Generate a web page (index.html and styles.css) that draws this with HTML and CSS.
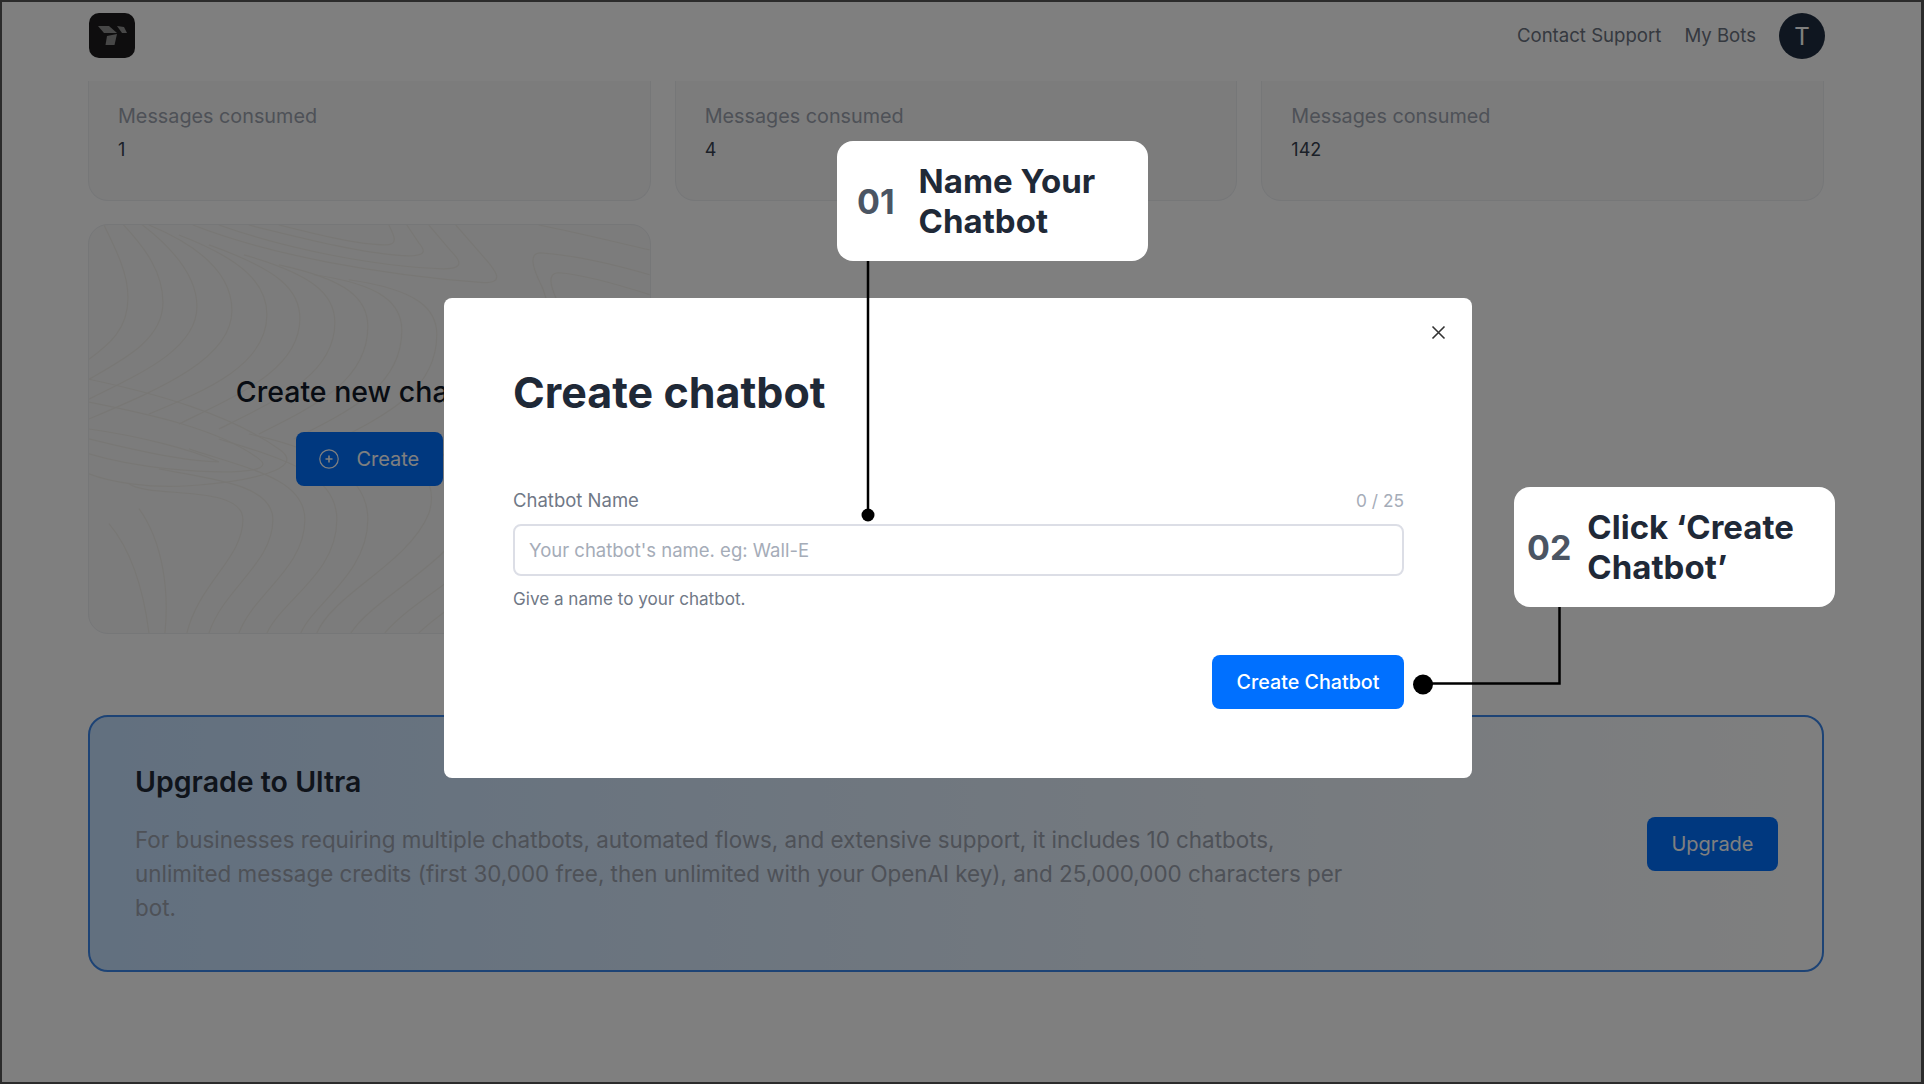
FILE: index.html
```html
<!DOCTYPE html>
<html lang="en">
<head>
    <meta charset="UTF-8">
    <meta name="viewport" content="width=device-width, initial-scale=1.0">
    <title>Create chatbot</title>
    <link rel="stylesheet" href="styles.css">
</head>
<body>
    <div class="frame">
        <!-- Top navigation -->
        <header class="top-bar">
            <div class="logo">
                <svg width="46" height="45" viewBox="0 0 46 45">
                    <polygon points="9,13 20,13 28,20 15,20" fill="#8e8e8e"/>
                    <polygon points="18,23 28,21 25.5,32 16.5,32" fill="#8e8e8e"/>
                    <polygon points="28,13 35,14 38,20 33,20" fill="#8e8e8e"/>
                </svg>
            </div>
            <nav class="top-links">
                <a class="top-link">Contact Support</a>
                <a class="top-link">My Bots</a>
                <div class="avatar">T</div>
            </nav>
        </header>

        <main class="dashboard">
            <!-- Bot cards, scrolled so that only their lower part shows -->
            <section class="bot-grid">
                <div class="bot-card">
                    <div class="bot-label">Messages consumed</div>
                    <div class="bot-value">1</div>
                </div>
                <div class="bot-card">
                    <div class="bot-label">Messages consumed</div>
                    <div class="bot-value">4</div>
                </div>
                <div class="bot-card">
                    <div class="bot-label">Messages consumed</div>
                    <div class="bot-value">142</div>
                </div>
            </section>

            <section class="bot-grid">
                <div class="create-card">
                    <svg class="contours" viewBox="0 0 561 410" preserveAspectRatio="none">
                        <!-- Upper left arcs -->
                        <path d="M10 -10 C30 30 39 50 39 73 C39 105 20 120 0 135"/>
                        <path d="M25 -10 C60 25 74 50 74 78 C74 115 35 135 0 155"/>
                        <path d="M40 -10 C90 25 108 55 108 82 C108 125 50 150 0 175"/>
                        <path d="M60 0 C120 25 143 55 143 86 C143 135 70 165 0 195"/>
                        <path d="M90 10 C155 35 178 60 178 90 C178 140 120 165 60 190"/>
                        <path d="M120 20 C190 45 211 65 211 94 C211 145 150 170 90 200"/>
                        <path d="M155 30 C225 50 246 70 246 98 C246 150 190 175 130 205"/>
                        <path d="M190 40 C260 55 279 75 279 102 C279 155 230 180 170 210"/>
                        <path d="M225 50 C295 60 313 80 313 106 C313 160 265 185 205 215"/>
                        <path d="M260 55 C330 65 348 85 348 110 C348 165 300 190 240 220"/>
                        <!-- Middle bands -->
                        <path d="M0 155 C70 170 140 190 190 225 C220 245 160 258 100 262 C60 265 20 258 0 250"/>
                        <path d="M0 178 C60 190 130 205 170 235 C190 250 130 250 80 245 C50 242 20 236 0 230"/>
                        <path d="M0 205 C50 212 100 225 130 238 C100 238 40 225 0 215"/>
                        <!-- Lower S-curves -->
                        <path d="M40 260 C60 275 154 260 154 296 C154 335 110 360 98 410"/>
                        <path d="M70 245 C120 255 184 260 184 296 C184 340 135 365 120 410"/>
                        <path d="M100 225 C160 245 216 255 216 296 C216 345 165 370 150 410"/>
                        <path d="M130 215 C195 235 248 250 248 296 C248 350 195 375 178 410"/>
                        <path d="M160 210 C230 225 279 250 279 296 C279 350 225 380 212 410"/>
                        <path d="M228 410 C245 370 320 340 340 290 C350 260 330 245 320 225"/>
                        <path d="M262 410 C285 375 360 340 380 295 C395 260 360 240 345 220"/>
                        <path d="M296 410 C325 375 400 340 425 295 C440 260 395 235 372 215"/>
                        <path d="M330 410 C365 375 440 340 470 295 C485 260 430 235 400 210"/>
                        <path d="M20 300 C45 330 55 370 60 410"/>
                        <path d="M50 285 C75 320 80 370 76 410"/>
                        <!-- Fold along the top edge -->
                        <path d="M104 0 C180 30 290 50 395 58 C415 58 408 48 400 38 L367 0"/>
                        <path d="M130 0 C200 25 290 42 355 44 C378 44 370 34 362 26 L340 0"/>
                        <path d="M160 0 C220 15 280 30 320 31 C340 31 335 24 330 18 L318 0"/>
                        <path d="M190 0 C230 10 270 20 296 20 C310 20 306 12 300 0"/>
                        <!-- Shape at the right edge -->
                        <path d="M561 50 C520 38 480 30 452 28 C440 28 444 42 450 55 C458 70 460 82 460 95"/>
                        <path d="M561 70 C530 60 495 50 470 48 C458 48 462 62 468 75 C474 88 476 98 476 115"/>
                        <path d="M561 25 C530 18 490 8 450 0"/>
                    </svg>
                    <h2 class="create-title">Create new chatbot</h2>
                    <button class="primary-dim create-button">
                        <svg width="20" height="20" viewBox="0 0 20 20" fill="none" stroke="#fff" stroke-width="1.2">
                            <circle cx="10" cy="10" r="9.2"/>
                            <path d="M10 6.5V13.5M6.5 10H13.5" stroke-width="1.6"/>
                        </svg>
                        Create
                    </button>
                </div>
            </section>

            <!-- Upgrade banner -->
            <section class="upgrade-card">
                <div class="upgrade-copy">
                    <h3 class="upgrade-title">Upgrade to Ultra</h3>
                    <p class="upgrade-text">For businesses requiring multiple chatbots, automated flows, and extensive support, it includes 10 chatbots, unlimited message credits (first 30,000 free, then unlimited with your OpenAI key), and 25,000,000 characters per bot.</p>
                </div>
                <button class="primary-dim upgrade-button">Upgrade</button>
            </section>
        </main>

        <!-- Dark overlay with the dialog -->
        <div class="overlay">
            <div class="modal">
                <svg class="modal-close" width="15" height="15" viewBox="0 0 15 15" fill="none" stroke="#333" stroke-width="1.6">
                    <path d="M1.5 1.5L13.5 13.5M13.5 1.5L1.5 13.5"/>
                </svg>
                <h1 class="modal-title">Create chatbot</h1>
                <div class="field-head">
                    <label class="field-label">Chatbot Name</label>
                    <span class="field-count">0 / 25</span>
                </div>
                <input class="field-input" type="text" placeholder="Your chatbot's name. eg: Wall-E">
                <div class="field-help">Give a name to your chatbot.</div>
                <div class="modal-actions">
                    <button class="submit-button">Create Chatbot</button>
                </div>
            </div>
        </div>

        <!-- Tutorial annotations -->
        <svg class="connectors" width="1924" height="1084" viewBox="0 0 1924 1084" fill="none" stroke="#000" stroke-width="2.5">
            <path d="M868 261V515"/>
            <circle cx="868" cy="515" r="6.5" fill="#000" stroke="none"/>
            <path d="M1559.5 607V683.5H1423"/>
            <circle cx="1423" cy="684.5" r="10" fill="#000" stroke="none"/>
        </svg>
        <div class="callout callout-one">
            <span class="callout-number">01</span>
            <span class="callout-text">Name Your Chatbot</span>
        </div>
        <div class="callout callout-two">
            <span class="callout-number">02</span>
            <span class="callout-text">Click ‘Create Chatbot’</span>
        </div>
    </div>
</body>
</html>
```

FILE: styles.css
```css
/* General page styling */
* {
    box-sizing: border-box;
}

body {
    margin: 0;
    background: #fff;
    font-family: Inter, "Liberation Sans", sans-serif;
}

/* Screenshot frame with its thin dark edge */
.frame {
    position: relative;
    height: 1084px;
    overflow: hidden;
    border-style: solid;
    border-color: #2b2b2b;
    border-width: 2px 3px 2px 2px;
}

/* Top bar */
.top-bar {
    height: 79px;
    padding: 11px 96px 0 87px;
    display: flex;
    align-items: flex-start;
    justify-content: space-between;
    background: #fff;
}

.logo {
    width: 46px;
    height: 45px;
    border-radius: 10px;
    background: #1c1a1c;
}

.logo svg {
    display: block;
}

.top-links {
    display: flex;
    align-items: center;
}

.top-link {
    margin: -2px 23px 0 0;
    font-size: 18.6px;
    color: #6b7280;
}

.avatar {
    width: 46px;
    height: 46px;
    border-radius: 50%;
    background: #1f2d40;
    color: #fff;
    font-size: 24px;
    display: flex;
    align-items: center;
    justify-content: center;
}

/* Dashboard content */
.dashboard {
    padding: 0 97px 0 86px;
}

.bot-grid {
    display: grid;
    grid-template-columns: repeat(3, 1fr);
    gap: 24px;
    margin-bottom: 23px;
}

.bot-card {
    height: 120px;
    padding: 23px 29px 0;
    background: #f8f8f8;
    border: 1px solid #eceef1;
    border-top: none;
    border-radius: 0 0 20px 20px;
}

.bot-label {
    font-size: 19.8px;
    line-height: 24px;
    color: #9ca3af;
}

.bot-value {
    margin-top: 10px;
    font-size: 18px;
    line-height: 24px;
    color: #374151;
}

/* Create new chatbot card */
.create-card {
    position: relative;
    height: 410px;
    display: flex;
    flex-direction: column;
    align-items: center;
    justify-content: center;
    background: #f8f8f8;
    border: 1px solid #eceef1;
    border-radius: 20px;
    overflow: hidden;
}

.contours {
    position: absolute;
    inset: 0;
    width: 100%;
    height: 100%;
    fill: none;
    stroke: #f1efea;
    stroke-width: 1.2;
}

.create-title {
    position: relative;
    margin: 2px 0 22px;
    font-size: 28.5px;
    line-height: 36px;
    font-weight: 500;
    color: #111827;
}

.primary-dim {
    background: #0070ff;
    color: #fff;
    border: none;
    border-radius: 8px;
    font-family: inherit;
    font-size: 20px;
}

.create-button {
    position: relative;
    width: 147px;
    height: 54px;
    display: flex;
    align-items: center;
    justify-content: center;
    gap: 17px;
}

/* Upgrade banner */
.upgrade-card {
    margin-top: 81px;
    height: 257px;
    padding: 0 44px 0 45px;
    display: flex;
    align-items: center;
    justify-content: space-between;
    border: 2px solid #3a86ea;
    border-radius: 20px;
    background: linear-gradient(90deg, #c4e0ff, #ffffff);
}

.upgrade-copy {
    width: 1220px;
    margin-top: 1px;
}

.upgrade-title {
    margin: 0 0 23px;
    font-size: 28.5px;
    line-height: 36px;
    font-weight: 600;
    color: #1f2937;
}

.upgrade-text {
    margin: 0;
    font-size: 22.4px;
    line-height: 34px;
    color: #9ca3af;
}

.upgrade-button {
    width: 131px;
    height: 54px;
}

/* Dark overlay and dialog */
.overlay {
    position: absolute;
    inset: 0;
    padding: 296px 0 0 442px;
    background: rgba(0, 0, 0, 0.5);
}

.modal {
    position: relative;
    width: 1028px;
    height: 480px;
    padding: 68px 68px 0 69px;
    background: #fff;
    border-radius: 8px;
}

.modal-close {
    position: absolute;
    top: 27px;
    right: 26px;
}

.modal-title {
    margin: 0 0 70px;
    font-size: 43px;
    line-height: 52px;
    font-weight: 700;
    color: #1f2937;
}

.field-head {
    display: flex;
    justify-content: space-between;
    align-items: center;
    height: 24px;
    margin-bottom: 12px;
}

.field-label {
    font-size: 18.5px;
    color: #707886;
}

.field-count {
    font-size: 17.3px;
    color: #a5acb8;
}

.field-input {
    display: block;
    width: 100%;
    height: 52px;
    padding: 0 14px;
    border: 2px solid #dcdee6;
    border-radius: 8px;
    font-family: inherit;
    font-size: 18.5px;
}

.field-input::placeholder {
    color: #a5acb8;
}

.field-help {
    margin-top: 12px;
    font-size: 17.1px;
    line-height: 22px;
    color: #707886;
}

.modal-actions {
    display: flex;
    justify-content: flex-end;
    margin-top: 45px;
}

.submit-button {
    width: 192px;
    height: 54px;
    background: #0070ff;
    color: #fff;
    border: none;
    border-radius: 8px;
    font-family: inherit;
    font-size: 19.7px;
    font-weight: 500;
}

/* Tutorial annotations */
.connectors {
    position: absolute;
    top: -2px;
    left: -2px;
}

.callout {
    position: absolute;
    height: 120px;
    display: flex;
    align-items: center;
    background: #fff;
    border-radius: 16px;
}

.callout-one {
    left: 835px;
    top: 139px;
    width: 311px;
    padding-left: 20px;
    gap: 24px;
}

.callout-two {
    left: 1512px;
    top: 485px;
    width: 321px;
    padding-left: 13px;
    gap: 16px;
}

.callout-number {
    font-size: 34px;
    font-weight: 700;
    color: #4b5563;
}

.callout-text {
    font-size: 33px;
    line-height: 40px;
    font-weight: 700;
    color: #1f2937;
}

.callout-one .callout-text {
    width: 200px;
}

.callout-two .callout-text {
    width: 240px;
}
```
